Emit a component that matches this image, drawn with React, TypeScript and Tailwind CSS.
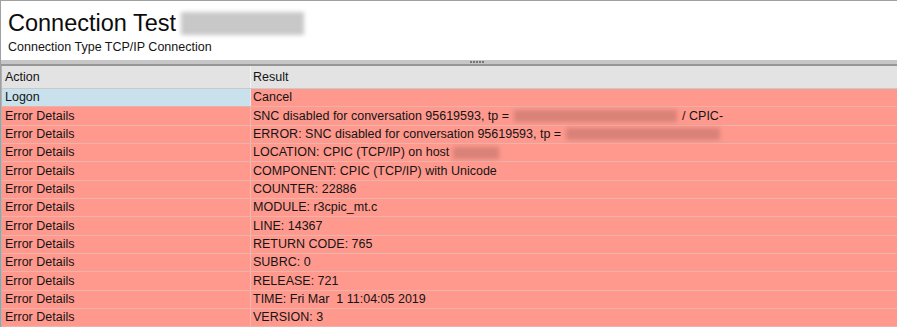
const rows: { action: string; result: React.ReactNode }[] = [
  {
    action: "Error Details",
    result: (
      <>
        SNC disabled for conversation 95619593, tp =
        <span className="inline-block w-[163px] h-[12px] mx-[5px] align-middle bg-[#d98278] blur-[2px]" />
        / CPIC-
      </>
    ),
  },
  {
    action: "Error Details",
    result: (
      <>
        ERROR: SNC disabled for conversation 95619593, tp =
        <span className="inline-block w-[154px] h-[12px] ml-[5px] align-middle bg-[#d98278] blur-[2px]" />
      </>
    ),
  },
  {
    action: "Error Details",
    result: (
      <>
        LOCATION: CPIC (TCP/IP) on host
        <span className="inline-block w-[46px] h-[12px] ml-[4px] align-middle bg-[#d98278] blur-[2px]" />
      </>
    ),
  },
  { action: "Error Details", result: "COMPONENT: CPIC (TCP/IP) with Unicode" },
  { action: "Error Details", result: "COUNTER: 22886" },
  { action: "Error Details", result: "MODULE: r3cpic_mt.c" },
  { action: "Error Details", result: "LINE: 14367" },
  { action: "Error Details", result: "RETURN CODE: 765" },
  { action: "Error Details", result: "SUBRC: 0" },
  { action: "Error Details", result: "RELEASE: 721" },
  { action: "Error Details", result: "TIME: Fri Mar  1 11:04:05 2019" },
  { action: "Error Details", result: "VERSION: 3" },
];

export default function App() {
  return (
    <div className="w-[897px] h-[327px] overflow-hidden bg-white border-l border-t border-[#a0a0a0] font-['Liberation_Sans',sans-serif] text-[#141414]">
      {/* title panel */}
      <div className="h-[59px] pl-[7px] pt-[9px]">
        <div className="flex items-center h-[26px]">
          <span className="text-[23.5px] leading-[26px] text-[#0c0c0c]">Connection Test</span>
          <span className="ml-[5px] w-[123px] h-[23px] bg-[#c8c8c8] blur-[2px]" />
        </div>
        <div className="mt-[4px] text-[12.5px] leading-[15px] whitespace-nowrap">Connection Type TCP/IP Connection</div>
      </div>

      {/* splitter */}
      <div className="h-[6px] bg-[#c6c6c6] border-b-2 border-[#969696] flex justify-center items-center">
        <div className="flex gap-[1px] ml-[55px]">
          {[0, 1, 2, 3, 4].map((i) => (
            <span key={i} className="w-[2px] h-[2px] bg-[#777]" />
          ))}
        </div>
      </div>

      {/* table */}
      <div className="border-l border-[#b4b4b4] text-[12.5px]">
        <div className="flex h-[23px] bg-[#e3e3e3] border-b border-[#c9c9c9]">
          <div className="w-[249px] pl-[3px] flex items-center border-r border-[#f2f2f2]">Action</div>
          <div className="flex-1 pl-[2px] flex items-center">Result</div>
        </div>
        <div className="flex h-[18.33px] border-b border-[#e6b2aa]">
          <div className="w-[249px] pl-[3px] flex items-center bg-[#c9e1ec] border-r border-[#dfe9ee]">Logon</div>
          <div className="flex-1 pl-[2px] flex items-center bg-[#ff998e]">Cancel</div>
        </div>
        {rows.map((r, i) => (
          <div key={i} className="flex h-[18.33px] bg-[#ff998e] border-b border-[#e9b4ac]">
            <div className="w-[249px] pl-[3px] flex items-center border-r border-[#ecb9b1]">{r.action}</div>
            <div className="flex-1 pl-[2px] flex items-center whitespace-pre">{r.result}</div>
          </div>
        ))}
      </div>
    </div>
  );
}
